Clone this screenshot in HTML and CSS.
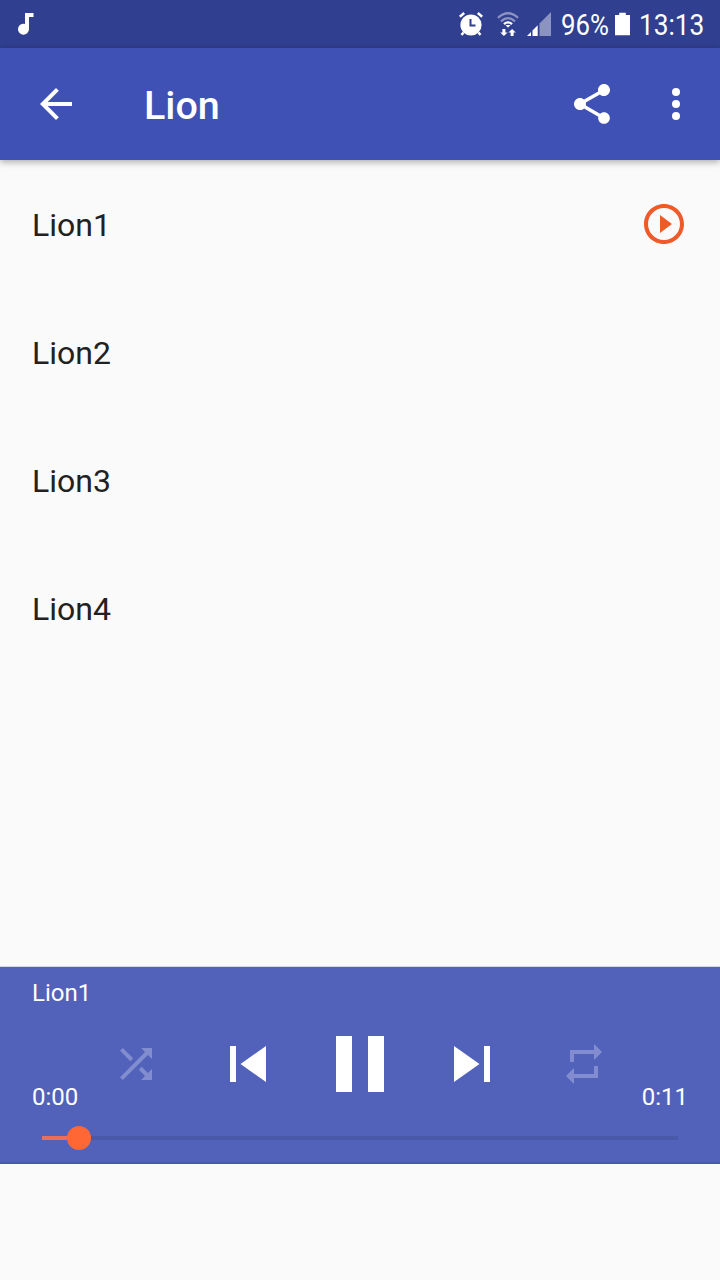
FILE: index.html
```html
<!DOCTYPE html>
<html lang="en">
<head>
<meta charset="utf-8">
<title>Lion</title>
<link rel="stylesheet" href="styles.css">
</head>
<body>
<div class="screen">
  <div class="status">
    <svg class="note" viewBox="0 0 16 22"><path d="M7 0h8.500v4H11v12.200A5.500 5.500 0 1 1 7 10.900z"/></svg>
    <div class="status-right">
      <svg class="alarm" viewBox="0 0 24 24"><circle cx="12" cy="13" r="10.600"/><path d="M4.500 20.500l-2 2.500M19.500 20.500l2 2.500M.8 4.800L5.200 1M23.200 4.800L18.800 1" class="alarm-lines"/><path d="M11.500 7v6.500h5" class="alarm-hands"/></svg>
      <svg class="wifi" viewBox="0 0 22 24"><path class="arc dim" d="M1 5.800Q11-3.300 21 5.800M4 9.300Q11 3 18 9.300"/><path class="arc" d="M7 12.200Q11 8.600 15 12.200"/><path d="M8.500 13h5L11 15.800zM5.400 17h3v3.500h2.200L6.900 24l-3.700-3.500h2.200zM13.600 24h3v-3.500h2.200L15.100 17l-3.700 3.500h2.200z"/></svg>
      <svg class="signal" viewBox="0 0 24 24"><path class="dim-fill" d="M12.500 11.500L24 0v24H12.500z"/><path d="M0 24l4-4V24zM5.500 18.500l5.200-5.200V24H5.500z"/></svg>
      <span class="battery-text">96%</span>
      <svg class="battery" viewBox="0 0 16 24"><path d="M4.500 0h7v2.300H16V24H0V2.300h4.500z"/></svg>
      <span class="clock">13:13</span>
    </div>
  </div>
  <header class="appbar">
    <svg class="icon" viewBox="0 0 24 24"><path d="M20 11H7.830l5.590-5.590L12 4l-8 8 8 8 1.410-1.410L7.830 13H20v-2z"/></svg>
    <h1 class="title">Lion</h1>
    <svg class="icon" viewBox="0 0 24 24"><path d="M18 16.080c-.76 0-1.440.3-1.960.77L8.910 12.700c.05-.23.09-.46.09-.7s-.04-.47-.09-.7l7.050-4.110c.54.5 1.250.81 2.040.81 1.660 0 3-1.340 3-3s-1.340-3-3-3-3 1.340-3 3c0 .24.04.47.09.7L8.040 9.810C7.500 9.310 6.790 9 6 9c-1.660 0-3 1.340-3 3s1.340 3 3 3c.79 0 1.500-.31 2.040-.81l7.120 4.160c-.05.21-.08.43-.08.65 0 1.610 1.310 2.920 2.920 2.920s2.920-1.310 2.920-2.920-1.310-2.920-2.920-2.920z"/></svg>
    <svg class="icon more" viewBox="0 0 24 24"><circle cx="12" cy="6" r="2"/><circle cx="12" cy="12" r="2"/><circle cx="12" cy="18" r="2"/></svg>
  </header>
  <main class="list">
    <div class="row"><span>Lion1</span>
      <svg class="icon playing" viewBox="0 0 24 24"><path d="M10 16.500l6-4.500-6-4.500v9zM12 2C6.480 2 2 6.480 2 12s4.480 10 10 10 10-4.480 10-10S17.520 2 12 2zm0 18c-4.410 0-8-3.590-8-8s3.590-8 8-8 8 3.590 8 8-3.590 8-8 8z"/></svg>
    </div>
    <div class="row"><span>Lion2</span></div>
    <div class="row"><span>Lion3</span></div>
    <div class="row"><span>Lion4</span></div>
  </main>
  <section class="player">
    <div class="track">Lion1</div>
    <div class="controls">
      <svg class="icon off" viewBox="0 0 24 24"><path d="M10.590 9.170L5.410 4 4 5.410l5.170 5.170 1.420-1.410zM14.500 4l2.040 2.040L4 18.590 5.410 20 17.960 7.460 20 9.500V4h-5.500zm.33 9.410l-1.410 1.410 3.130 3.130L14.500 20H20v-5.500l-2.040 2.040-3.130-3.130z"/></svg>
      <svg class="icon skip" viewBox="0 0 24 24"><path d="M6 6h2v12H6zm3.500 6l8.500 6V6z"/></svg>
      <svg class="icon pause" viewBox="0 0 24 24"><path d="M6 19h4V5H6v14zm8-14v14h4V5h-4z"/></svg>
      <svg class="icon skip" viewBox="0 0 24 24"><path d="M6 18l8.500-6L6 6v12zM16 6v12h2V6h-2z"/></svg>
      <svg class="icon off" viewBox="0 0 24 24"><path d="M7 7h10v3l4-4-4-4v3H5v6h2V7zm10 10H7v-3l-4 4 4 4v-3h12v-6h-2v4z"/></svg>
    </div>
    <div class="times"><span>0:00</span><span>0:11</span></div>
    <div class="seek"><div class="played"></div><div class="thumb"></div><div class="rest"></div></div>
  </section>
</div>
</body>
</html>
```
FILE: styles.css
```css
* { box-sizing: border-box; }
body { margin: 0; font-family: Roboto, "Liberation Sans", sans-serif; background: #fafafa; }
svg { display: block; flex: none; fill: #fff; }
.screen { width: 720px; height: 1280px; display: flex; flex-direction: column; overflow: hidden; }

.status { height: 48px; flex: none; background: #303f8f; color: #fff; display: flex; justify-content: space-between; padding-left: 18px; }
.status-right { display: flex; width: 261px; }
.note { width: 16px; height: 22px; margin-top: 13px; }
.alarm { width: 24px; height: 24px; margin-top: 12px; }
.alarm-lines { fill: none; stroke: #fff; stroke-width: 2.500; }
.alarm-hands { fill: none; stroke: #303f8f; stroke-width: 2; }
.wifi { width: 22px; height: 24px; margin: 12px 0 0 14px; }
.arc { fill: none; stroke: #fff; stroke-width: 2.300; }
.dim { stroke: #8b93c2; }
.signal { width: 24px; height: 24px; margin: 12px 0 0 8px; }
.dim-fill { fill: #8b93c2; }
.battery-text, .clock { font-size: 30px; line-height: 50px; white-space: nowrap; transform-origin: 0 50%; }
.battery-text { width: 48px; margin-left: 10px; transform: scaleX(.86); }
.battery { width: 15px; height: 24px; margin: 12px 0 0 6px; }
.clock { width: 66px; margin-left: 9px; transform: scaleX(.875); }

.appbar { height: 112px; flex: none; background: #3f51b5; box-shadow: 0 2px 7px rgba(0, 0, 0, .33); display: flex; align-items: center; padding: 0 20px 0 32px; }
.icon { width: 48px; height: 48px; }
.title { flex: 1; margin: 4px 0 0 64px; color: #fff; font-size: 39.500px; line-height: 48px; font-weight: 500; }
.more { margin-left: 36px; }

.list { flex: 1; }
.row { height: 128px; padding: 0 32px; display: flex; align-items: center; justify-content: space-between; font-size: 32px; color: #212121; }
.row span { padding-top: 2px; }
.playing { fill: #f05a28; }

.player { height: 198px; flex: none; margin-bottom: 116px; background: #5262bb; border-top: 1px solid #d4d6e6; border-bottom: 2px solid #4657ae; color: #fff; font-size: 24px; line-height: 28px; }
.track { padding: 12px 32px 0; }
.controls { height: 96px; margin-top: 9px; padding: 0 80px; display: grid; grid-template-columns: repeat(5, 112px); align-items: center; justify-items: center; }
.off { fill: #828dcf; }
.skip { width: 72px; height: 72px; }
.pause { width: 96px; height: 96px; }
.times { display: flex; justify-content: space-between; margin-top: -29px; padding: 0 32px; }
.seek { display: flex; align-items: center; height: 24px; margin-top: 15px; padding: 0 42px; }
.played { width: 25px; height: 4px; background: #e8705a; }
.thumb { width: 24px; height: 24px; border-radius: 50%; background: #ff6835; }
.rest { flex: 1; height: 4px; background: #4a58a8; }
```
